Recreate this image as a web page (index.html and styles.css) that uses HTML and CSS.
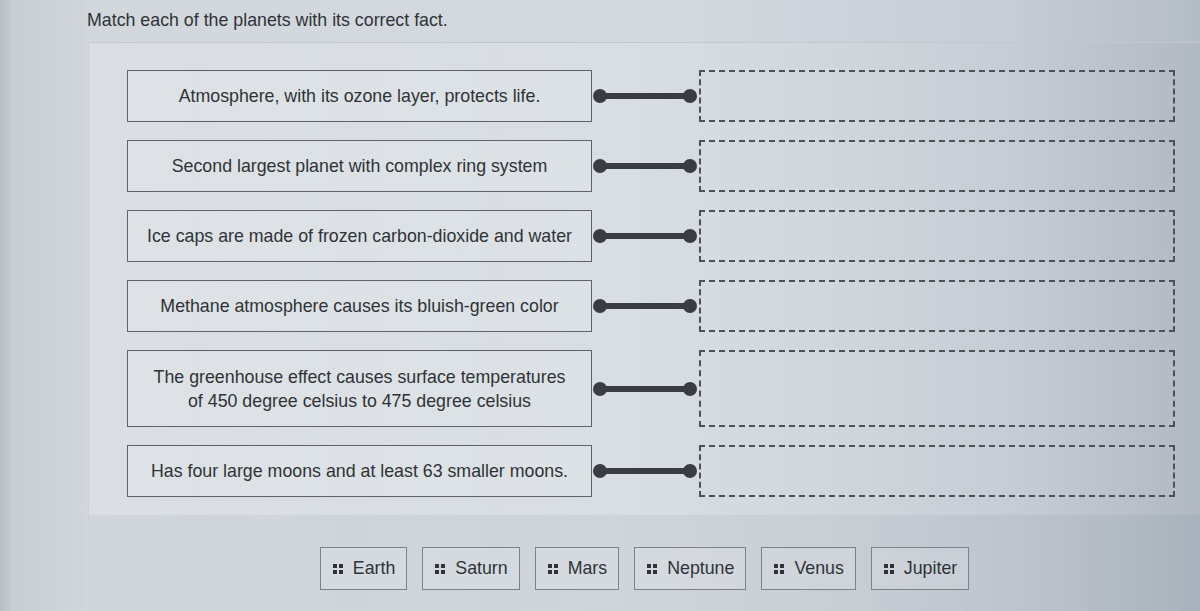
FILE: index.html
```html
<!DOCTYPE html>
<html lang="en">
<head>
<meta charset="utf-8">
<title>Match planets</title>
<link rel="stylesheet" href="styles.css">
</head>
<body>
<div class="page">
  <p class="prompt">Match each of the planets with its correct fact.</p>
  <div class="panel">
    <div class="rows">
      <div class="row">
        <div class="fact">Atmosphere, with its ozone layer, protects life.</div>
        <div class="link"><span class="dot"></span><span class="bar"></span><span class="dot"></span></div>
        <div class="drop"></div>
      </div>
      <div class="row">
        <div class="fact">Second largest planet with complex ring system</div>
        <div class="link"><span class="dot"></span><span class="bar"></span><span class="dot"></span></div>
        <div class="drop"></div>
      </div>
      <div class="row">
        <div class="fact">Ice caps are made of frozen carbon-dioxide and water</div>
        <div class="link"><span class="dot"></span><span class="bar"></span><span class="dot"></span></div>
        <div class="drop"></div>
      </div>
      <div class="row">
        <div class="fact">Methane atmosphere causes its bluish-green color</div>
        <div class="link"><span class="dot"></span><span class="bar"></span><span class="dot"></span></div>
        <div class="drop"></div>
      </div>
      <div class="row tall">
        <div class="fact">The greenhouse effect causes surface temperatures<br>of 450 degree celsius to 475 degree celsius</div>
        <div class="link"><span class="dot"></span><span class="bar"></span><span class="dot"></span></div>
        <div class="drop"></div>
      </div>
      <div class="row">
        <div class="fact">Has four large moons and at least 63 smaller moons.</div>
        <div class="link"><span class="dot"></span><span class="bar"></span><span class="dot"></span></div>
        <div class="drop"></div>
      </div>
    </div>
    <div class="tray">
      <div class="chip"><span class="grip"><i></i><i></i><i></i><i></i></span>Earth</div>
      <div class="chip"><span class="grip"><i></i><i></i><i></i><i></i></span>Saturn</div>
      <div class="chip"><span class="grip"><i></i><i></i><i></i><i></i></span>Mars</div>
      <div class="chip"><span class="grip"><i></i><i></i><i></i><i></i></span>Neptune</div>
      <div class="chip"><span class="grip"><i></i><i></i><i></i><i></i></span>Venus</div>
      <div class="chip"><span class="grip"><i></i><i></i><i></i><i></i></span>Jupiter</div>
    </div>
  </div>
</div>
</body>
</html>
```
FILE: styles.css
```css
html, body {
  margin: 0;
  padding: 0;
  height: 100%;
}
body {
  font-family: "Liberation Sans", Arial, sans-serif;
  color: #2f3337;
  background: linear-gradient(90deg, #b9bec4 0, #c9ced3 14px, #d2d7dc 90px, #d4dae0 55%, #c6ccd4 85%, #b4bcc6 100%);
  overflow: hidden;
}
.page {
  min-height: 611px;
  display: flex;
  flex-direction: column;
}
.prompt {
  margin: 0;
  padding: 10px 0 0 87px;
  font-size: 17.8px;
  line-height: 20px;
  height: 42px;
  box-sizing: border-box;
}
.panel {
  margin-left: 88px;
  flex: 1;
  display: flex;
  flex-direction: column;
  border-top: 1px solid #c3c8ce;
  border-left: 1px solid #cdd2d7;
  background: linear-gradient(90deg, rgba(255,255,255,0.18), rgba(255,255,255,0.06) 70%, rgba(0,0,0,0.02));
}
.rows {
  padding: 27px 0 18px 38px;
  display: flex;
  flex-direction: column;
  gap: 18px;
}
.row {
  display: grid;
  grid-template-columns: 465px 108px 475px;
  min-height: 52px;
}
.row.tall {
  min-height: 77px;
}
.fact {
  border: 1px solid #5f6368;
  display: flex;
  align-items: center;
  justify-content: center;
  text-align: center;
  font-size: 17.8px;
  line-height: 24px;
  padding: 0 10px;
  background: rgba(255,255,255,0.12);
}
.link {
  display: flex;
  align-items: center;
  padding-left: 1px;
}
.dot {
  width: 14px;
  height: 14px;
  border-radius: 50%;
  background: #393c41;
  flex: none;
}
.bar {
  flex: none;
  width: 78px;
  height: 6px;
  margin: 0 -1px;
  background: #393c41;
}
.drop {
  border: 2px dashed #4e5258;
  margin-left: -1px;
}
.tray {
  flex: 1;
  background: rgba(40,55,70,0.05);
  display: flex;
  justify-content: center;
  align-items: flex-start;
  gap: 15px;
  padding-top: 32px;
}
.chip {
  height: 43px;
  box-sizing: border-box;
  border: 1px solid #7d8287;
  background: rgba(255,255,255,0.14);
  display: flex;
  align-items: center;
  gap: 10px;
  padding: 0 11px 0 12px;
  font-size: 17.8px;
  color: #2f3337;
}
.grip {
  display: grid;
  grid-template-columns: 4px 4px;
  grid-template-rows: 4px 4px;
  gap: 2px;
}
.grip i {
  background: #2f3337;
  display: block;
}
```
